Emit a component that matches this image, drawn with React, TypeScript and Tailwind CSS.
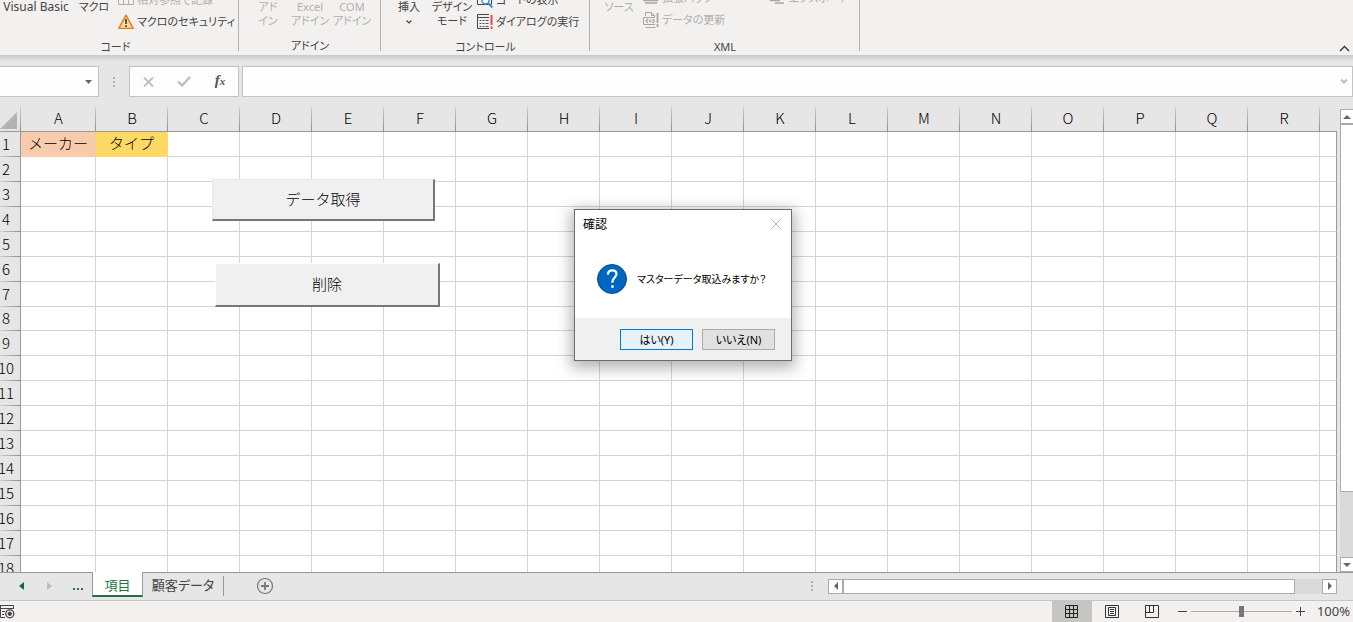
import type { ReactNode } from "react";

const COLUMNS = "ABCDEFGHIJKLMNOPQR".split("");
const ROWS = Array.from({ length: 18 }, (_, i) => i + 1);
const UI_FONT = "font-['Noto_Sans','Noto_Sans_CJK_JP',sans-serif]";
const CELL_FONT = "font-['Noto_Sans_CJK_JP',sans-serif] [font-feature-settings:normal]";

function RibbonGroup({ title, className, children }: { title: string; className: string; children?: ReactNode }) {
  return (
    <section className={`relative flex h-full shrink-0 flex-col ${className}`}>
      <div className="flex h-[38px] text-[#444]">{children}</div>
      <h2 className="text-center leading-[18px] text-[#444]">{title}</h2>
      <span className="absolute top-0 right-0 h-[51px] w-px bg-[#b5b3b1]" />
    </section>
  );
}

function LargeButton({ lines, className, disabled }: { lines: string[]; className: string; disabled?: boolean }) {
  return (
    <button
      disabled={disabled}
      className={`flex shrink-0 flex-col items-center leading-[14px] whitespace-nowrap disabled:text-[#b1afad] ${className}`}
    >
      {lines.map((l) => (
        <span key={l}>{l}</span>
      ))}
    </button>
  );
}

function SmallButton({ icon, label, disabled }: { icon: ReactNode; label: string; disabled?: boolean }) {
  return (
    <button
      disabled={disabled}
      className="flex h-[22px] shrink-0 items-center gap-[3px] whitespace-nowrap disabled:text-[#b1afad]"
    >
      {icon}
      {label}
    </button>
  );
}

const TableIcon = () => (
  <svg width="16" height="16" viewBox="0 0 16 16" fill="none" stroke="#b1afad">
    <path d="M.5 1.5h15v11H.5zM.5 5.5h15M5.5 5.5v7M10.5 5.5v7" />
  </svg>
);
const WarningIcon = () => (
  <svg width="16" height="16" viewBox="0 0 16 16">
    <path d="M8 1.2 15.2 14.4H.8Z" fill="#fbdc9b" stroke="#e07b1f" strokeWidth="1.4" strokeLinejoin="round" />
    <path d="M8 5v5M8 11.3v1.6" stroke="#333" strokeWidth="1.6" />
  </svg>
);
const CodeViewIcon = () => (
  <svg width="16" height="16" viewBox="0 0 16 16" fill="none">
    <path d="M.5.5h14v12H.5zM.5 3.5h14" stroke="#444" />
    <circle cx="8.5" cy="8.5" r="3.5" fill="#fff" stroke="#2b8fd6" strokeWidth="1.4" />
    <path d="m11 11 4.5 4.5" stroke="#2b8fd6" strokeWidth="1.8" />
  </svg>
);
const DialogIcon = () => (
  <svg width="16" height="16" viewBox="0 0 16 16" fill="none">
    <path d="M12 .5H.5v14H12M.5 3.5H12" stroke="#444" />
    <path d="M2.5 6.5h2m1 0h2m1 0h3M2.5 9.5h2m1 0h2m1 0h3M2.5 12.5h2m1 0h2m1 0h3" stroke="#555" />
    <path d="M14.5 1v10M14.5 12.5V15" stroke="#e8494d" strokeWidth="2" />
  </svg>
);
const RefreshDataIcon = () => (
  <svg width="16" height="16" viewBox="0 0 16 16" fill="none" stroke="#a9a7a5">
    <path d="M2.5 4V.5h6l3 3V5M8.5.5v3h3M12 5.5H.5v7H12M2.5 15.5h10" />
    <path d="M5 7 3 9l2 2M9.5 7l2 2-2 2" strokeWidth="1.2" />
    <circle cx="7.3" cy="9" r="1" />
    <path d="M14.5 1v10M14.5 12v3" strokeWidth="1.8" />
  </svg>
);
const PackIcon = () => (
  <svg width="16" height="16" viewBox="0 0 16 16" fill="none" stroke="#a9a7a5">
    <path d="M.5 1.5h14v9H.5zM2 13h12" strokeWidth="1.3" />
  </svg>
);
const ExportIcon = () => (
  <svg width="16" height="16" viewBox="0 0 16 16" fill="none" stroke="#a9a7a5">
    <path d="M1.5 1.5h9v9h-9zM6 13h9" strokeWidth="1.3" />
  </svg>
);

function Ribbon() {
  return (
    <header className="relative flex h-[55px] shrink-0 overflow-hidden bg-[#f3f1ef] text-[11px]">
      <RibbonGroup title="コード" className="w-[239px] pr-2">
        <LargeButton lines={["Visual Basic"]} className="w-[72px] text-xs leading-[14px]" />
        <LargeButton lines={["マクロ"]} className="w-11" />
        <div className="ml-0.5 flex flex-col justify-end pb-[5px]">
          <SmallButton icon={<TableIcon />} label="相対参照で記録" disabled />
          <SmallButton icon={<WarningIcon />} label="マクロのセキュリティ" />
        </div>
      </RibbonGroup>
      <RibbonGroup title="アドイン" className="w-[142px]">
        <LargeButton lines={["アド", "イン"]} className="ml-2 w-[42px]" disabled />
        <LargeButton lines={["Excel", "アドイン"]} className="w-[42px]" disabled />
        <LargeButton lines={["COM", "アドイン"]} className="w-[42px]" disabled />
      </RibbonGroup>
      <RibbonGroup title="コントロール" className="w-[209px]">
        <button className="ml-1.5 flex w-11 shrink-0 flex-col items-center leading-[14px]">
          <span>挿入</span>
          <svg width="8" height="14" viewBox="0 0 8 14" fill="none" stroke="#444">
            <path d="m1.5 6.5 2.500 2.500L6.500 6.5" strokeWidth="1.2" />
          </svg>
        </button>
        <LargeButton lines={["デザイン", "モード"]} className="w-[42px]" />
        <div className="ml-1 flex flex-col justify-end pb-[5px]">
          <SmallButton icon={<CodeViewIcon />} label="コードの表示" />
          <SmallButton icon={<DialogIcon />} label="ダイアログの実行" />
        </div>
      </RibbonGroup>
      <RibbonGroup title="XML" className="w-[270px]">
        <LargeButton lines={["ソース"]} className="ml-2 w-[42px]" disabled />
        <div className="ml-[3px] flex flex-col justify-end pb-[7px]">
          <SmallButton icon={<PackIcon />} label="拡張パック" disabled />
          <SmallButton icon={<RefreshDataIcon />} label="データの更新" disabled />
        </div>
        <div className="ml-11 flex flex-col justify-end pb-[29px]">
          <SmallButton icon={<ExportIcon />} label="エクスポート" disabled />
        </div>
      </RibbonGroup>
      <button aria-label="リボンを折りたたむ" className="mt-auto mr-[3px] mb-px ml-auto">
        <svg width="11" height="10" viewBox="0 0 11 10" fill="none" stroke="#333" strokeWidth="1.3">
          <path d="m1 7 4.500-4.500L10 7" />
        </svg>
      </button>
    </header>
  );
}

function Dots() {
  return (
    <span className="flex flex-col gap-0.5">
      <i className="size-0.5 bg-[#b0b0b0]" />
      <i className="size-0.5 bg-[#b0b0b0]" />
      <i className="size-0.5 bg-[#b0b0b0]" />
    </span>
  );
}

function FormulaBar() {
  const box = "flex h-[31px] items-center border border-[#c3c3c3] bg-[#fdfdfd]";
  return (
    <div className="flex shrink-0 items-center bg-[#e6e6e6] bg-[linear-gradient(#cbcac9,#e6e6e6)] bg-[length:100%_7px] bg-no-repeat pt-[11px] pb-2.5">
      <div className={`${box} w-[99px] border-l-0`}>
        <input aria-label="名前ボックス" className="w-0 flex-1 bg-transparent outline-none" />
        <button aria-label="名前の一覧" className="mr-1.5">
          <svg width="7" height="4" viewBox="0 0 7 4" fill="#666">
            <path d="M0 0h7L3.500 4z" />
          </svg>
        </button>
      </div>
      <div className="flex w-[30px] justify-center">
        <Dots />
      </div>
      <div className={`${box} w-[110px]`}>
        <button aria-label="キャンセル" className="flex flex-1 justify-center">
          <svg width="11" height="10" viewBox="0 0 11 10" stroke="#bdbdbd" strokeWidth="1.8">
            <path d="m1 .5 9 9M10 .5l-9 9" />
          </svg>
        </button>
        <button aria-label="入力" className="flex flex-1 justify-center">
          <svg width="14" height="11" viewBox="0 0 14 11" fill="none" stroke="#bdbdbd" strokeWidth="2.4">
            <path d="m1 5.500 4 4L13 1" />
          </svg>
        </button>
        <button
          aria-label="関数の挿入"
          className="flex-1 pb-0.5 font-['Liberation_Serif',serif] text-[15px] leading-5 font-bold text-[#555] italic"
        >
          f<span className="text-[11px]">x</span>
        </button>
      </div>
      <div className={`${box} ml-[3px] flex-1`}>
        <input aria-label="数式バー" className="w-0 flex-1 bg-transparent outline-none" />
        <button aria-label="数式バーの展開" className="mr-1">
          <svg width="8" height="7" viewBox="0 0 8 7" fill="none" stroke="#bdbdbd" strokeWidth="2">
            <path d="m1 1.500 3 3 3-3" />
          </svg>
        </button>
      </div>
    </div>
  );
}

function cellFill(row: number, col: string) {
  if (row === 1 && col === "A") return "border-[#f8cbad] bg-[#f8cbad]";
  if (row === 1 && col === "B") return "border-[#ffd966] bg-[#ffd966]";
  return "border-[#d4d4d4] bg-white";
}
const CELL_TEXT: Record<string, string> = { A1: "メーカー", B1: "タイプ" };

function Sheet() {
  const colHead =
    "h-[25px] border-b border-[#999] bg-[linear-gradient(#cfcfcf,#8f8f8f)] bg-[length:1px_100%] bg-right bg-no-repeat p-0 pb-0.5 text-center leading-[22px] font-light";
  const sheetButton = `absolute border-t border-r-2 border-b-2 border-l border-r-[#777] border-b-[#777] bg-[#f0f0f0] pb-0.5 text-[15px] font-light text-black ${CELL_FONT}`;
  return (
    <div className="relative min-h-0 min-w-0 flex-1 overflow-hidden">
      <table className={`w-full table-fixed border-separate border-spacing-0 bg-[#e6e6e6] text-[15px] text-black ${CELL_FONT}`}>
        <colgroup>
          <col className="w-[21px]" />
          <col className="w-[75px]" />
          {COLUMNS.slice(1).map((c) => (
            <col key={c} className="w-[72px]" />
          ))}
          <col />
        </colgroup>
        <thead>
          <tr>
            <th aria-label="すべて選択" className={colHead}>
              <svg width="17" height="17" viewBox="0 0 17 17" fill="#b3b3b3" className="mt-1">
                <path d="M17 0v17H0z" />
              </svg>
            </th>
            {COLUMNS.map((c) => (
              <th key={c} scope="col" className={colHead}>
                {c}
              </th>
            ))}
            <th className="border-b border-[#999] p-0" />
          </tr>
        </thead>
        <tbody>
          {ROWS.map((r) => (
            <tr key={r} className={r === 8 ? "h-6" : "h-[25px]"}>
              <th
                scope="row"
                className="border-r border-[#999] bg-[linear-gradient(90deg,#cfcfcf,#8f8f8f)] bg-[length:100%_1px] bg-bottom bg-no-repeat p-0 pb-[3px] leading-[21px] font-light"
              >
                <div className="-ml-2 flex justify-center">{r}</div>
              </th>
              {COLUMNS.map((c) => (
                <td
                  key={c}
                  className={`border-r border-b p-0 pb-0.5 text-center leading-5 font-light whitespace-nowrap ${cellFill(r, c)}`}
                >
                  {CELL_TEXT[c + r]}
                </td>
              ))}
              <td className="border-r border-b border-r-[#999] border-b-[#d4d4d4] bg-white p-0" />
            </tr>
          ))}
        </tbody>
      </table>
      <button
        className={`top-[72px] left-[212px] h-[42px] w-[223px] border-t-[#e8e8e8] border-l-[#e8e8e8] ${sheetButton}`}
      >
        データ取得
      </button>
      <button className={`top-[156px] left-[215px] h-11 w-[225px] border-t-white border-l-white ${sheetButton}`}>
        削除
      </button>
    </div>
  );
}

function VerticalScroll() {
  return (
    <div className="flex w-4 shrink-0 flex-col pt-0.5 pl-[3px]">
      <div className="flex min-h-0 flex-1 flex-col bg-[#dadada]">
        <button aria-label="上へ" className="flex h-[15px] shrink-0 items-center justify-center border border-r-0 border-[#ababab] bg-white">
          <svg width="8" height="4" viewBox="0 0 8 4" fill="#666">
            <path d="M4 0 8 4H0z" />
          </svg>
        </button>
        <div className="h-[368px] border border-r-0 border-[#ababab] bg-white" />
        <button
          aria-label="下へ"
          className="mt-auto flex h-[15px] shrink-0 items-center justify-center border border-r-0 border-[#ababab] bg-white"
        >
          <svg width="8" height="4" viewBox="0 0 8 4" fill="#666">
            <path d="M0 0h8L4 4z" />
          </svg>
        </button>
      </div>
    </div>
  );
}

function TabBar() {
  return (
    <nav className="flex h-7 shrink-0 items-start border-t border-[#999] bg-[#e6e6e6] text-[13px] text-[#444]">
      <button aria-label="前のシート" className="flex h-[26px] w-[42px] items-center justify-center">
        <svg width="5" height="8" viewBox="0 0 5 8" fill="#0e6b3a">
          <path d="M5 0v8L0 4z" />
        </svg>
      </button>
      <button aria-label="次のシート" className="flex h-[26px] w-3.5 items-center justify-center">
        <svg width="5" height="8" viewBox="0 0 5 8" fill="#bdbdbd">
          <path d="M0 0v8l5-4z" />
        </svg>
      </button>
      <button aria-label="その他のシート" className="flex h-[26px] w-9 items-center justify-center gap-0.5 pt-1.5 pl-2">
        <i className="size-0.5 bg-[#217346]" />
        <i className="size-0.5 bg-[#217346]" />
        <i className="size-0.5 bg-[#217346]" />
      </button>
      <button className="-mt-px h-[25px] w-[51px] border-x border-b-2 border-x-[#999] border-b-[#217346] bg-white pt-[3px] leading-5 text-[#217346]">
        項目
      </button>
      <button className="mt-[3px] h-5 w-[81px] border-r border-[#999] pb-0.5 leading-[18px] whitespace-nowrap">
        顧客データ
      </button>
      <button aria-label="新しいシート" className="ml-8 flex h-[26px] items-center">
        <svg width="18" height="18" viewBox="0 0 18 18" fill="none" stroke="#777">
          <circle cx="9" cy="9" r="7.500" strokeWidth="1.2" />
          <path d="M9 5v8M5 9h8" strokeWidth="1.8" />
        </svg>
      </button>
      <div className="mr-4 ml-auto flex h-[26px] items-center gap-[15px]">
        <Dots />
        <div className="flex h-[15px] w-[509px] bg-[#dadada]">
          <button aria-label="左へ" className="flex w-[15px] items-center justify-center border border-[#ababab] bg-white">
            <svg width="4" height="8" viewBox="0 0 4 8" fill="#666">
              <path d="M4 0v8L0 4z" />
            </svg>
          </button>
          <div className="w-[452px] border border-[#ababab] bg-white" />
          <button
            aria-label="右へ"
            className="ml-auto flex w-[15px] items-center justify-center border border-[#ababab] bg-white"
          >
            <svg width="4" height="8" viewBox="0 0 4 8" fill="#666">
              <path d="M0 0v8l4-4z" />
            </svg>
          </button>
        </div>
      </div>
    </nav>
  );
}

function StatusBar() {
  return (
    <footer className="flex h-[22px] shrink-0 items-center border-t border-[#c6c6c6] bg-[#f3f1ef] text-[#444]">
      <button aria-label="マクロの記録">
        <svg width="15" height="14" viewBox="0 0 15 14" fill="none" stroke="#444">
          <path d="M0 .5h13.500V4M0 3.500h13M.5 1v11.500H5M2 6.500h3M2 9.500h2" />
          <circle cx="9.800" cy="8.800" r="4" fill="#f3f1ef" strokeWidth="1.3" />
          <circle cx="9.800" cy="8.800" r="1.700" fill="#444" />
        </svg>
      </button>
      <div className="ml-auto flex h-full items-center">
        <button aria-label="標準" className="flex h-full w-10 items-center justify-center bg-[#c8c6c4]">
          <svg width="14" height="14" viewBox="0 0 14 14" fill="none" stroke="#222">
            <path d="M.5.5h12v12H.5zM4.500.5v12M8.500.5v12M.5 4.500h12M.5 8.500h12" />
          </svg>
        </button>
        <button aria-label="ページ レイアウト" className="flex h-full w-10 items-center justify-center">
          <svg width="14" height="14" viewBox="0 0 14 14" fill="none" stroke="#333">
            <path d="M.5.5h13v12H.5zM3.500 2.500h7v8h-7zM5 4.500h4M5 6.500h4M5 8.500h4" />
          </svg>
        </button>
        <button aria-label="改ページ プレビュー" className="flex h-full w-10 items-center justify-center">
          <svg width="14" height="14" viewBox="0 0 14 14" fill="none" stroke="#333">
            <path d="M.5.5h13v12H.5zM.5 7.500h8V.5M4.500.5v7" />
          </svg>
        </button>
        <button aria-label="縮小" className="ml-1.5 flex w-[9px]">
          <svg width="9" height="9" viewBox="0 0 9 9" stroke="#444">
            <path d="M0 4.500h9" />
          </svg>
        </button>
        <input
          type="range"
          aria-label="ズーム"
          min={0}
          max={200}
          defaultValue={100}
          className="mx-1 h-3 w-[101px] appearance-none bg-[linear-gradient(#aaa,#aaa)] bg-[length:100%_1px] bg-center bg-no-repeat [&::-webkit-slider-thumb]:h-[11px] [&::-webkit-slider-thumb]:w-[5px] [&::-webkit-slider-thumb]:appearance-none [&::-webkit-slider-thumb]:bg-[#777]"
        />
        <button aria-label="拡大" className="flex w-[9px]">
          <svg width="9" height="9" viewBox="0 0 9 9" stroke="#444">
            <path d="M0 4.500h9M4.500 0v9" />
          </svg>
        </button>
        <button className="mr-[3px] ml-3 pb-0.5 text-[13px] leading-[18px]">100%</button>
      </div>
    </footer>
  );
}

function ConfirmDialog() {
  return (
    <div
      role="dialog"
      aria-labelledby="dlg-title"
      className="absolute top-[209px] left-[574px] flex w-[218px] flex-col border border-[#6d6d6d] bg-white text-xs text-black shadow-[0_4px_14px_3px_rgba(0,0,0,0.3)]"
    >
      <div className="flex h-[30px] items-center justify-between pr-[9px] pl-2">
        <h1 id="dlg-title">確認</h1>
        <button aria-label="閉じる" className="pb-0.5">
          <svg width="12" height="12" viewBox="0 0 12 12" stroke="#b5b5b5" className="block">
            <path d="m1 1 10 10M11 1 1 11" />
          </svg>
        </button>
      </div>
      <div className="flex h-[78px] items-center gap-2.5 pl-[22px]">
        <svg width="30" height="30" viewBox="0 0 30 30">
          <circle cx="15" cy="15" r="14.500" fill="#0067c0" stroke="#0a4a86" />
          <path
            d="M10.800 10.600C11 7.800 12.700 6.300 15.300 6.300c2.500 0 4.200 1.500 4.200 3.800 0 3.500-4.100 3.900-4.100 7.700v1"
            fill="none"
            stroke="#fff"
            strokeWidth="2.2"
          />
          <path d="M14.200 21.300h2.500v2.500h-2.500z" fill="#fff" />
        </svg>
        <p className="pt-0.5 text-[10px] whitespace-nowrap">マスターデータ取込みますか？</p>
      </div>
      <div className="flex h-[42px] items-center justify-end gap-[9px] bg-[#f0f0f0] pr-4 text-[11px]">
        <button className="h-[21px] w-[73px] border border-[#0078d7] bg-[#e5f1fb] pt-0.5 leading-4">はい(Y)</button>
        <button className="h-[21px] w-[73px] border border-[#adadad] bg-[#e1e1e1] pt-0.5 leading-4">いいえ(N)</button>
      </div>
    </div>
  );
}

export default function App() {
  return (
    <div
      className={`relative flex h-screen flex-col overflow-hidden bg-[#e6e6e6] text-xs [font-feature-settings:'palt'] ${UI_FONT}`}
    >
      <Ribbon />
      <FormulaBar />
      <main className="flex min-h-0 flex-1">
        <Sheet />
        <VerticalScroll />
      </main>
      <TabBar />
      <StatusBar />
      <ConfirmDialog />
    </div>
  );
}
